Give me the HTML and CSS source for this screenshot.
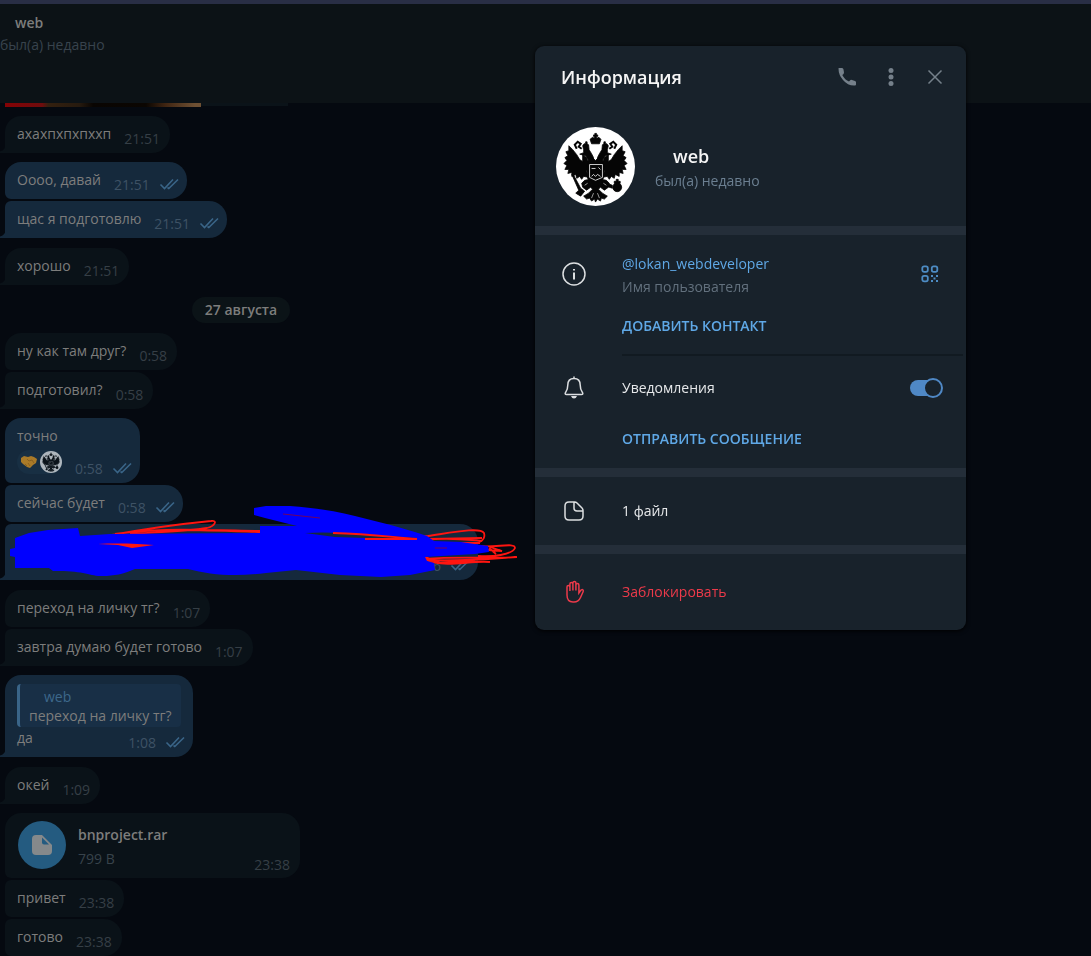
FILE: index.html
```html
<!DOCTYPE html>
<html lang="ru">
<head>
    <meta charset="UTF-8">
    <meta name="viewport" content="width=device-width, initial-scale=1.0">
    <title>web</title>
    <link rel="stylesheet" href="styles.css">
</head>
<body>
    <svg class="sprite" aria-hidden="true">
        <symbol id="ticks" viewBox="0 0 21 12">
            <path d="M1.500 6.500 5.500 10.500 14 1.500M8.500 9.500 9.800 10.500 19 1.500" fill="none" stroke="currentColor" stroke-width="1.600"/>
        </symbol>
        <symbol id="eagle" viewBox="0 0 80 80">
            <circle cx="40" cy="40" r="40" fill="#fff"/>
            <g fill="#050505" stroke="#050505" stroke-width=".8">
                <path d="M36 17 34.500 12.500 37 10.500 39 11.500V9.500H38V8H39.300V6.500H41V8H42.300V9.500H41V11.500L43.500 10.500 45.500 12.500 44 17Z"/>
                <path d="M28 23 27 19 28.500 17H30V15H31.500V17L33 18 33.500 23 36 27 38 31V36L34 35 30 29 24 27.500 28 26ZM52 23 53 19 51.500 17H50V15H48.500V17L47 18 46.500 23 44 27 42 31V36L46 35 50 29 56 27.500 52 26Z"/>
                <path d="M27 28 31 31 33 36 31 45 33 51 28 50 26 53 24 50 21 52 20 48 16 50 16 46 12 47 13 43 9 43 11 39 8 37 11 34 9 31 12 29 10 25 13 24 13 19 17 23 21 28 24 33 27 35ZM53 28 49 31 47 36 49 45 47 51 52 50 54 53 56 50 59 52 60 48 64 50 64 46 68 47 67 43 71 43 69 39 72 37 69 34 71 31 68 29 70 25 67 24 67 19 63 23 59 28 56 33 53 35Z"/>
                <path d="M33 33 37 31 40 34 43 31 47 33 49 40 48 52 45 56 43 61 37 61 35 56 32 52 31 40Z"/>
                <path d="M34 53 29 54 26 57 27 61 31 64 35 61 37 63 33 67 28 70 31 73 34 72 36 75 39 73 40 76 42 73 45 75 46 72 49 73 52 70 47 67 43 63 45 61 49 64 53 61 54 57 51 54 46 53 43 60H37Z"/>
                <path d="M16 48 17.500 48 25 62 29 65 25 70 20 67 23 64ZM52 57 57 59 57 62 51 60Z"/>
                <circle cx="62" cy="61" r="4.500"/>
                <path d="M61 53H63V55H65V57H59V55H61Z"/>
            </g>
            <path d="M21 22 19 18 22 15 25 17 23 20 26 22M59 22 61 18 58 15 55 17 57 20 54 22" fill="none" stroke="#050505" stroke-width="2"/>
            <path d="M34 38H47V51L40 54 34 51ZM36 42H40M43 41 45 43M36 50 38 48 40 50 42 48 45 50" fill="none" stroke="#fff" stroke-width=".8"/>
            <path d="M29 59 32 57M51 59 48 57M38 67 36 72M42 67 44 72" fill="none" stroke="#fff" stroke-width=".6"/>
            <path d="M40 19 44 24 41 29H39L36 24Z" fill="#fff"/>
        </symbol>
    </svg>

    <header class="chat-header">
        <strong class="chat-name">web</strong>
        <span class="chat-status">был(а) недавно</span>
    </header>

    <main class="chat">
        <div class="photo-edge"><span></span></div>

        <div class="message first last"><span class="text">ахахпхпхпххп</span><time>21:51</time></div>

        <div class="message out first"><span class="text">Оооо, давай</span><time>21:51</time><svg class="ticks"><use href="#ticks"/></svg></div>
        <div class="message out last"><span class="text">щас я подготовлю</span><time>21:51</time><svg class="ticks"><use href="#ticks"/></svg></div>

        <div class="message first spaced last"><span class="text">хорошо</span><time>21:51</time></div>

        <div class="date">27 августа</div>

        <div class="message first spaced"><span class="text">ну как там друг?</span><time>0:58</time></div>
        <div class="message last"><span class="text">подготовил?</span><time>0:58</time></div>

        <div class="message out first reacted">
            <div class="content">
                <span class="text">точно</span>
                <div class="reaction">
                    <svg class="handshake" viewBox="0 0 18 14">
                        <path d="M1 3 4 1 8 2 11 1 14 2 17 4 16 8 13 10 10 13 7 12 3 9 1 7Z" fill="#a97a28"/>
                        <path d="M7 4 9 6 12 5 14 8M5 9 7 11M8 8 10 11" fill="none" stroke="#80591e" stroke-width=".8"/>
                    </svg>
                    <svg class="reactor" viewBox="0 0 80 80"><use href="#eagle"/></svg>
                </div>
            </div>
            <time>0:58</time><svg class="ticks"><use href="#ticks"/></svg>
        </div>
        <div class="message out"><span class="text">сейчас будет</span><time>0:58</time><svg class="ticks"><use href="#ticks"/></svg></div>
        <div class="message out last covered">
            <time>1:06</time><svg class="ticks"><use href="#ticks"/></svg>
            <svg class="scribble" viewBox="0 500 530 90">
                <g fill="none" stroke="#ff1510" stroke-width="1.800">
                    <path d="M112 535C150 528 180 524 211 521C218 520 215 526 207 528C185 532 150 532 130 534M130 532C170 528 210 530 262 531M115 534C160 528 200 530 262 532"/>
                    <path d="M330 533C370 534 400 539 428 536C455 532 480 527 484 533C486 539 480 544 473 543M360 539H430L482 538M425 540C450 537 470 540 482 541M430 543H480"/>
                    <path d="M478 546C496 548 515 542 515 548C512 555 492 557 478 556M487 550 502 551 490 547M489 548 496 554M425 559C460 556 490 559 517 557M426 560C460 562 500 558 516 557M428 561C450 568 470 560 490 562M425 557 440 563 475 561"/>
                </g>
                <path d="M10 549 15 548V538L29 533 48 530 78 528 80 536 110 534 260 533V526L297 526 265 518 254 515V508L266 506 290 506C315 508 335 511 355 516C388 524 410 530 427 536L434 541 461 542 488 546 489 552 475 554 425 557 427 561 434 563 435 570 410 575 381 577 340 575 296 570 266 573C235 577 210 575 188 569H135C123 574 115 576 102 576C90 576 82 570 53 571L49 568H15V557L10 556Z" fill="#00f"/>
                <path d="M98 544C120 543 140 544 154 545L132 548 118 545Z" fill="#ff1510"/>
                <path d="M305 533C335 531 370 535 417 538H365L335 537Z" fill="#15293c"/>
                <path d="M333 533C370 534 390 537 417 539H365" fill="none" stroke="#ff1510" stroke-width="1.800"/>
                <path d="M283 514 320 518M435 548 447 548" stroke="#700060" stroke-width="1"/>
            </svg>
        </div>

        <div class="message first spaced"><span class="text">переход на личку тг?</span><time>1:07</time></div>
        <div class="message last"><span class="text">завтра думаю будет готово</span><time>1:07</time></div>

        <div class="message out first last reply">
            <blockquote>
                <span class="author">web</span>
                <span>переход на личку тг?</span>
            </blockquote>
            <div class="reply-line"><span class="text">да</span><time>1:08</time><svg class="ticks"><use href="#ticks"/></svg></div>
        </div>

        <div class="message first spaced last"><span class="text">окей</span><time>1:09</time></div>

        <div class="message first file">
            <span class="file-icon">
                <svg viewBox="0 0 22 22"><path d="M5 1H11L21 11V17Q21 21 17 21H5Q1 21 1 17V5Q1 1 5 1Z"/><path class="fold" d="M11 3.500 18 10.500H13Q11 10.500 11 8.500Z"/></svg>
            </span>
            <div class="file-info">
                <strong>bnproject.rar</strong>
                <span>799 B</span>
            </div>
            <time>23:38</time>
        </div>
        <div class="message"><span class="text">привет</span><time>23:38</time></div>
        <div class="message"><span class="text">готово</span><time>23:38</time></div>
    </main>

    <div class="overlay">
        <section class="info-box" role="dialog" aria-labelledby="info-title">
            <div class="info-header">
                <h1 id="info-title">Информация</h1>
                <button type="button" aria-label="Позвонить">
                    <svg viewBox="0 0 20 20"><path d="M1.500 1.500Q1.200 1 2 1H5Q6.300 1 6.500 2.500L7 5.500Q7 7 5.300 8Q8 13 12 14.500L13.500 13Q14 12.700 15 13L18 14Q19 14.400 19 15.500V17.500Q19 18.500 18 18.500Q11 19 6 13Q1.500 8 1.500 1.500Z" fill="currentColor"/></svg>
                </button>
                <button type="button" aria-label="Меню">
                    <svg viewBox="0 0 20 20"><g fill="currentColor"><circle cx="10" cy="3.500" r="2.500"/><circle cx="10" cy="10" r="2.500"/><circle cx="10" cy="16.500" r="2.500"/></g></svg>
                </button>
                <button type="button" aria-label="Закрыть">
                    <svg viewBox="0 0 20 20"><path d="M3.500 3.500 16.500 16.500M16.500 3.500 3.500 16.500" stroke="currentColor" stroke-width="1.500"/></svg>
                </button>
            </div>

            <div class="profile">
                <svg class="avatar" viewBox="0 0 80 80"><use href="#eagle"/></svg>
                <div>
                    <h2>web</h2>
                    <p>был(а) недавно</p>
                </div>
            </div>

            <div class="section details">
                <div class="row username">
                    <svg class="row-icon" viewBox="0 0 24 24"><circle cx="12" cy="12" r="11"/><path d="M12 10.500V17.500M12 7V8.500" stroke-width="2"/></svg>
                    <div class="row-text">
                        <a href="#">@lokan_webdeveloper</a>
                        <small>Имя пользователя</small>
                    </div>
                    <button class="qr" type="button" aria-label="QR-код">
                        <svg viewBox="0 0 18 18"><g fill="none" stroke="currentColor" stroke-width="1.800"><rect x="1.300" y="1.300" width="5.500" height="5.500" rx="1.800"/><rect x="10.800" y="1.300" width="5.500" height="5.500" rx="1.800"/><rect x="1.300" y="10.800" width="5.500" height="5.500" rx="1.800"/></g><path d="M10 10h2v2h-2zM15 10h2v2h-2zM12.500 12.500h2v2h-2zM10 15h2v2h-2zM15 15h2v2h-2z" fill="currentColor"/></svg>
                    </button>
                </div>
                <button class="action" type="button">ДОБАВИТЬ КОНТАКТ</button>
                <hr>
                <div class="row">
                    <svg class="row-icon" viewBox="0 0 24 24"><path d="M12 2.500C8 2.500 5.800 5 5.800 9C5.800 13.500 4.500 15 3.500 16.500Q2.500 18.500 4.500 18.500H19.500Q21.500 18.500 20.500 16.500C19.500 15 18.200 13.500 18.200 9C18.200 5 16 2.500 12 2.500ZM12 .5V2.500"/><path d="M9 20H15Q14 22.500 12 22.500T9 20Z" fill="currentColor" stroke="none"/></svg>
                    <label class="row-text" for="notify">Уведомления</label>
                    <input class="switch" type="checkbox" id="notify" checked>
                </div>
                <button class="action send" type="button">ОТПРАВИТЬ СООБЩЕНИЕ</button>
            </div>

            <div class="section files">
                <div class="row">
                    <svg class="row-icon" viewBox="0 0 24 24"><path d="M7 3H12.500Q14 3 15 4L20 9Q21 10 21 11.500V17Q21 21 17 21H7Q3 21 3 17V7Q3 3 7 3ZM12 3V9Q12 12 15 12H21"/></svg>
                    <span class="row-text">1 файл</span>
                </div>
            </div>

            <div class="section block">
                <div class="row">
                    <svg class="row-icon" viewBox="0 0 24 24"><path d="M5 12V7Q5 5.500 6.400 5.500T7.900 7V11M7.900 11V4Q7.900 2.500 9.400 2.500T10.900 4V10.500M10.900 10V3Q10.900 1.500 12.400 1.500T13.900 3V10.500M13.900 10V5Q13.900 3.500 15.400 3.500T16.900 5V13L18.700 10.500Q20 9 21 10Q21.700 10.700 21 12L18.500 17.500Q16.500 22 12 22H11Q5 22 5 15V11"/></svg>
                    <span class="row-text">Заблокировать</span>
                </div>
            </div>
        </section>
    </div>
</body>
</html>
```

FILE: styles.css
```css
*, *::before {
    box-sizing: border-box;
}
body {
    margin: 0;
    min-height: 100vh;
    font-family: "Open Sans", "Noto Sans", sans-serif;
    font-size: 14px;
    line-height: 20px;
    color: #7d7d7c;
    background: #050910;
    overflow: hidden;
}
h1, h2, p {
    margin: 0;
}
button {
    padding: 0;
    border: none;
    background: none;
    font: inherit;
    color: inherit;
    cursor: pointer;
}
svg {
    display: block;
}
.sprite {
    position: absolute;
    width: 0;
    height: 0;
}

/* chat */
.chat-header {
    display: flex;
    flex-direction: column;
    gap: 2px;
    height: 103px;
    padding-top: 9px;
    border-top: 4px solid #292e45;
    background: #0c1216;
}
.chat-name {
    padding-left: 15px;
    font-weight: 600;
}
.chat-status {
    color: #38434d;
}
.chat {
    display: flex;
    flex-direction: column;
    align-items: flex-start;
    gap: 2px;
    padding-left: 5px;
}
.photo-edge {
    width: 283px;
    height: 4px;
    background: #0b1319;
    border-bottom: 1px solid #050910;
}
.photo-edge span {
    display: block;
    width: 196px;
    height: 4px;
    background: linear-gradient(90deg, #850205, #6e0c0d 19%, #34200f 22%, #261a0f 38%, #090502 45%, #0b0602 72%, #402512 82%, #6e5033 97%);
}
.message {
    position: relative;
    display: flex;
    align-items: flex-end;
    padding: 8px 10px 4px 12px;
    border-radius: 6px 18px 18px 6px;
    background: #0a1218;
}
.message.first {
    margin-top: 7px;
    border-top-left-radius: 16px;
}
.message.spaced {
    margin-top: 8px;
}
.message.last {
    border-bottom-left-radius: 0;
}
.message.last::before {
    content: "";
    position: absolute;
    left: -6px;
    bottom: 0;
    width: 6px;
    height: 8px;
    background: radial-gradient(circle at 0 0, transparent 6px, #0a1218 7px);
}
.out {
    padding-right: 7px;
    background: #15293c;
}
.message.out.last::before {
    background: radial-gradient(circle at 0 0, transparent 6px, #15293c 7px);
}
.text {
    padding-bottom: 5px;
}
time {
    margin-left: 13px;
    color: #363f46;
}
.out time {
    color: #3e5265;
}
.ticks {
    width: 21px;
    height: 12px;
    margin: 0 0 5px 9px;
    color: #3a6588;
}
.date {
    width: 98px;
    margin: 10px 0 0 187px;
    padding: 3px 0;
    border-radius: 13px;
    background: #0b1317;
    font-weight: 600;
    text-align: center;
}
.reacted {
    height: 65px;
}
.content {
    display: flex;
    flex-direction: column;
    gap: 4px;
}
.content .text {
    padding: 0;
}
.reaction {
    display: flex;
    align-items: center;
    gap: 2px;
    height: 24px;
    margin-bottom: 5px;
    padding-left: 3px;
    border-radius: 12px;
    background: #182f43;
}
.handshake {
    width: 18px;
    height: 14px;
}
.reactor {
    width: 22px;
    height: 22px;
    opacity: 0.65;
}
.covered {
    justify-content: flex-end;
    width: 473px;
    height: 56px;
}
.scribble {
    position: absolute;
    left: -5px;
    top: -24px;
    width: 530px;
    height: 90px;
}
.reply {
    flex-direction: column;
    align-items: stretch;
    gap: 1px;
    width: 188px;
    height: 82px;
    padding-top: 9px;
}
blockquote {
    display: flex;
    flex-direction: column;
    width: 164px;
    height: 44px;
    margin: 0;
    padding: 3px 0 0 9px;
    border-left: 3px solid #3a6588;
    border-radius: 4px;
    background: #182f46;
    line-height: 19px;
}
.author {
    padding-left: 15px;
    color: #3d688b;
}
.reply-line {
    display: flex;
    align-items: flex-end;
}
.reply-line time {
    margin-left: auto;
}
.file {
    width: 295px;
    height: 65px;
    padding: 8px 10px 3px 13px;
    align-items: flex-start;
}
.file-icon {
    display: grid;
    place-items: center;
    width: 48px;
    height: 48px;
    border-radius: 50%;
    background: #245b80;
}
.file-icon svg {
    width: 22px;
    height: 22px;
    fill: #85898b;
}
.file-icon .fold {
    fill: #245b80;
}
.file-info {
    display: flex;
    flex-direction: column;
    gap: 4px;
    margin-left: 12px;
    padding-top: 4px;
    color: #38434b;
}
.file-info strong {
    font-weight: 600;
    color: #7d7d7c;
}
.file time {
    align-self: flex-end;
    margin-left: auto;
}

/* info box */
.overlay {
    position: fixed;
    inset: 0;
    display: flex;
    justify-content: flex-end;
    align-items: flex-start;
    padding: 46px 125px 0 0;
}
.info-box {
    width: 431px;
    overflow: hidden;
    border-radius: 9px;
    background: #18222b;
    color: #e6e8ea;
    box-shadow: 0 1px 4px #000;
}
.info-header {
    display: flex;
    align-items: center;
    height: 62px;
    padding: 0 19px 0 26px;
    color: #75808a;
}
.info-header h1 {
    margin-right: auto;
    font-size: 18px;
    font-weight: 600;
    color: #f5f5f5;
}
.info-header button {
    margin-left: 20px;
    padding: 2px;
}
.info-header svg {
    width: 20px;
    height: 20px;
}
.profile {
    display: flex;
    align-items: center;
    gap: 20px;
    padding: 19px 20px 20px 21px;
}
.avatar {
    width: 79px;
    height: 79px;
}
.profile h2 {
    padding-left: 18px;
    font-size: 18px;
    font-weight: 600;
    line-height: 26px;
    color: #f5f5f5;
}
.profile p {
    padding-top: 2px;
    color: #6b7f91;
}
.section {
    border-top: 9px solid #242e39;
}
.details {
    padding: 19px 0;
}
.row {
    display: flex;
    align-items: center;
    padding: 0 23px 0 27px;
}
.row-icon {
    width: 24px;
    height: 24px;
    margin-right: 36px;
    fill: none;
    stroke: currentColor;
    stroke-width: 1.5px;
    color: #dcdfe1;
}
.username .row-icon, .username .qr {
    margin-bottom: 4px;
}
.row-text {
    display: flex;
    flex-direction: column;
    gap: 3px;
    margin-right: auto;
}
.row-text small {
    font-size: 14px;
    color: #62707d;
}
a {
    color: #5fa8e6;
    text-decoration: none;
}
.qr {
    padding: 4px;
    color: #4d8cc4;
}
.qr svg {
    width: 18px;
    height: 18px;
}
.action {
    display: block;
    margin: 19px 0 18px 87px;
    font-weight: 600;
    color: #5fa8e6;
}
hr {
    height: 2px;
    margin: 0 3px 20px 87px;
    border: none;
    background: #111a21;
}
.switch {
    appearance: none;
    display: flex;
    align-items: center;
    width: 33px;
    height: 20px;
    margin: 0;
    cursor: pointer;
    position: relative;
    isolation: isolate;
}
.switch::before {
    content: "";
    width: 20px;
    height: 20px;
    border: 2px solid #4f88c5;
    border-radius: 50%;
    background: #18222b;
}
.switch::after {
    content: "";
    position: absolute;
    z-index: -1;
    left: 0;
    top: 2px;
    width: 28px;
    height: 16px;
    border-radius: 8px;
    background: #4f88c5;
}
.switch:checked::before {
    margin-left: auto;
}
.send {
    margin: 29px 0 0 87px;
}
.files {
    padding: 22px 0;
}
.block {
    padding: 26px 0;
}
.block .row, .block .row-icon {
    color: #ec3a4a;
}
```
